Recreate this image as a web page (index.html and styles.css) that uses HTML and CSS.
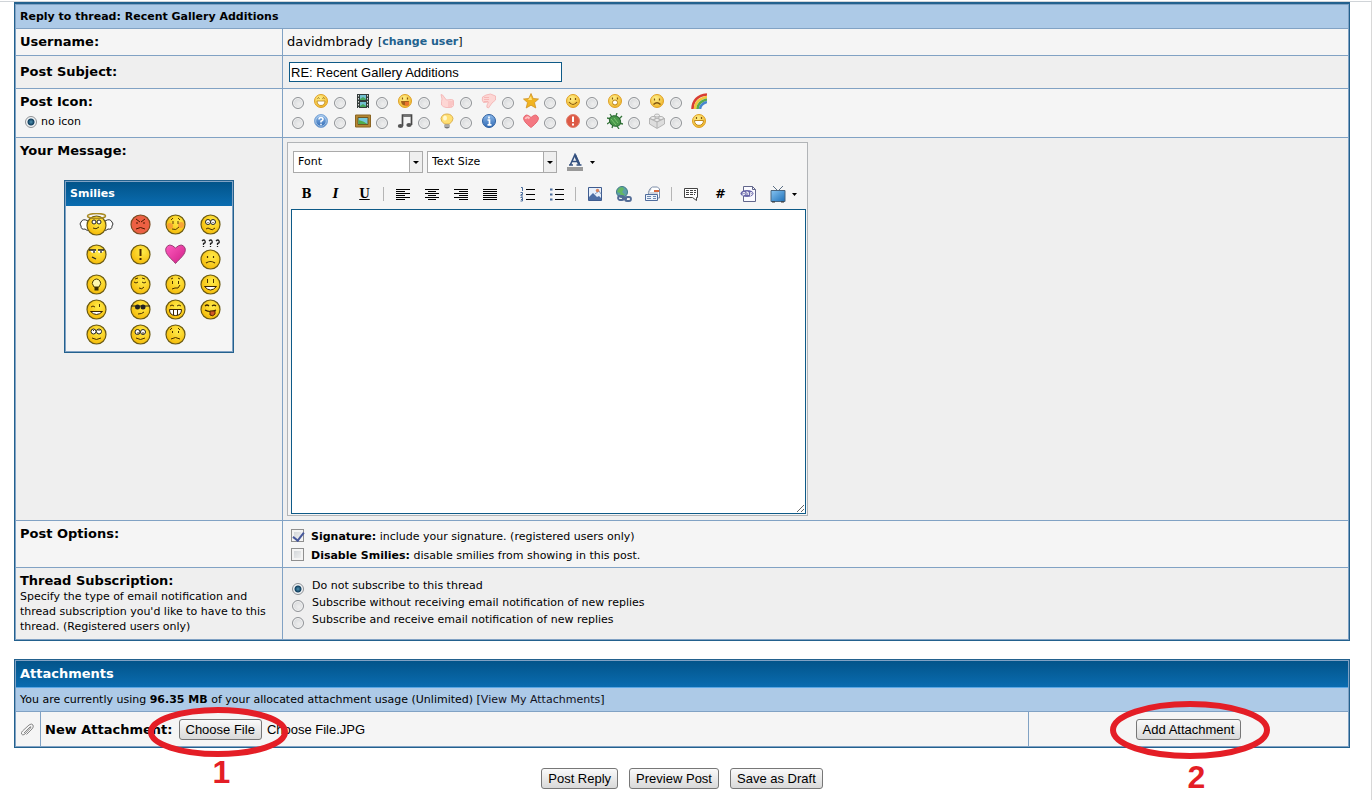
FILE: index.html
```html
<!DOCTYPE html>
<html lang="en">
<head>
<meta charset="utf-8">
<title>Reply to thread: Recent Gallery Additions</title>
<link rel="stylesheet" href="styles.css">
</head>
<body>
<svg class="defs" aria-hidden="true">
  <defs>
    <radialGradient id="gold" cx=".6" cy=".35" r=".75"><stop offset="0" stop-color="#ffec4a"/><stop offset="1" stop-color="#f4b400"/></radialGradient>
    <radialGradient id="soft" cx=".4" cy=".3" r=".8"><stop offset="0" stop-color="#fff08a"/><stop offset="1" stop-color="#eeae1e"/></radialGradient>
    <linearGradient id="blue" x1="0" y1="0" x2="0" y2="1"><stop offset="0" stop-color="#8db9ea"/><stop offset="1" stop-color="#2f69b3"/></linearGradient>
    <linearGradient id="sky" x1="0" y1="0" x2="1" y2="1"><stop offset="0" stop-color="#86c4f2"/><stop offset="1" stop-color="#1f70b8"/></linearGradient>
    <linearGradient id="pink" x1="0" y1="0" x2="1" y2="1"><stop offset="0" stop-color="#ff5cc0"/><stop offset="1" stop-color="#cf1f86"/></linearGradient>
  </defs>
  <symbol id="face" viewBox="0 0 21 21"><circle cx="10.5" cy="10.5" r="9.5" fill="url(#gold)" stroke="#6b5a12" stroke-width="1.2"/></symbol>
  <symbol id="dot" viewBox="0 0 16 16"><circle cx="8" cy="8" r="6.5" fill="url(#soft)" stroke="#dfa126"/></symbol>
</svg>

<main class="page">
<form class="panel">
  <h1 class="bar">Reply to thread: Recent Gallery Additions</h1>

  <div class="row">
    <div class="cell name">Username:</div>
    <div class="cell user">davidmbrady <span class="small">[<a href="#">change user</a>]</span></div>
  </div>

  <div class="row alt">
    <label class="cell name middle" for="subject">Post Subject:</label>
    <div class="cell subject"><input class="text" id="subject" type="text" value="RE: Recent Gallery Additions"></div>
  </div>

  <div class="row">
    <div class="cell name">Post Icon:
      <label class="small none"><input class="radio" type="radio" name="icon" checked>no icon</label>
    </div>
    <div class="cell icons">
      <label><input class="radio" type="radio" name="icon" aria-label="grin"><svg viewBox="0 0 16 16"><use href="#dot"/><path d="M4 8h8c0 6-8 6-8 0z" fill="#fff" stroke="#b98318" stroke-width=".8"/><path d="M4.500 5.500q1-1.500 2 0M9.500 5.500q1-1.500 2 0" fill="none" stroke="#8a6010"/></svg></label>
      <label><input class="radio" type="radio" name="icon" aria-label="film"><svg viewBox="0 0 16 16"><path d="M2 1h12v14H2z" fill="#333c3a"/><path d="M5 2h6v5H5zM5 9h6v5H5z" fill="#72bfd0"/><path d="M5 6l3-2 3 2v1H5zM5 13l3-2 3 2v1H5z" fill="#46a45a"/><path d="M3.500 2v13M12.500 2v13" stroke="#ddd" stroke-dasharray="1.500 1.500"/></svg></label>
      <label><input class="radio" type="radio" name="icon" aria-label="tongue"><svg viewBox="0 0 16 16"><use href="#dot"/><path d="M4 8h8c0 6-8 6-8 0z" fill="#a4601a"/><path d="M8 9h4v3q-2 2-4 0z" fill="#e8742c"/><path d="M5.500 4.500v2M10.500 4.500v2" stroke="#8a5410" stroke-width="1.200"/></svg></label>
      <label><input class="radio" type="radio" name="icon" aria-label="thumb up"><svg viewBox="0 0 16 16"><path d="M2 1.500q2 0 3 2.500l2.500 3 5-.5q2.500 0 2 2.500v3.500q-1 2-3 2H7q-3-.5-4.500-2.500V8.500L3 6z" fill="#fdd6d4" stroke="#f3b0b0" stroke-width=".8"/><path d="M9 9h5M9 11h5M9 13h4" stroke="#f3a9a9" stroke-width=".7"/></svg></label>
      <label><input class="radio" type="radio" name="icon" aria-label="thumb down"><svg viewBox="0 0 16 16"><path d="M1.500 4q3-2.500 8-3l5 2v4l-3.500 3-3.500 5q-2.500 0-1.500-3l1.500-3-5 .5q-2-2-1-5.500z" fill="#fdd6d4" stroke="#f3b0b0" stroke-width=".8"/><path d="M3 4.500h5M3 6.500h5M3 8.500h4" stroke="#f3a9a9" stroke-width=".7"/></svg></label>
      <label><input class="radio" type="radio" name="icon" aria-label="star"><svg viewBox="0 0 16 16"><path d="M8 .5l2.200 5 5.300.5-4 3.600 1.300 5.400L8 12.200 3.200 15l1.300-5.400L.5 6l5.300-.5z" fill="#f1b421" stroke="#cf9224" stroke-width=".8"/><path d="M8 3l1 4H5z" fill="#ffe278"/></svg></label>
      <label><input class="radio" type="radio" name="icon" aria-label="smile"><svg viewBox="0 0 16 16"><use href="#dot"/><path d="M4 9q4 5 8 0" fill="none" stroke="#815712" stroke-width="1.200"/><path d="M5.500 5v2M10.500 5v2" stroke="#815712" stroke-width="1.200"/></svg></label>
      <label><input class="radio" type="radio" name="icon" aria-label="surprised"><svg viewBox="0 0 16 16"><use href="#dot"/><ellipse cx="8" cy="9.500" rx="2.500" ry="2.500" fill="#fff" stroke="#b98318"/><path d="M5.500 4.500v2M10.500 4.500v2" stroke="#815712" stroke-width="1.200"/></svg></label>
      <label><input class="radio" type="radio" name="icon" aria-label="sad"><svg viewBox="0 0 16 16"><use href="#dot"/><path d="M4.500 11.500q3.500-3.500 7 0" fill="none" stroke="#815712" stroke-width="1.200"/><path d="M5.500 5.500v2M10.500 5.500v2" stroke="#815712" stroke-width="1.200"/></svg></label>
      <label><input class="radio" type="radio" name="icon" aria-label="rainbow"><svg viewBox="0 0 16 16" fill="none" stroke-width="2.600"><path d="M1.500 16Q2 3 16 1.500" stroke="#d93d32"/><path d="M4 16Q4.500 6 16 4" stroke="#f0c63c"/><path d="M6.500 16Q7 8.500 16 6.500" stroke="#59ab4a"/><path d="M9 16Q9.500 11 16 9" stroke="#4686cf"/></svg></label>
      <label><input class="radio" type="radio" name="icon" aria-label="question"><svg viewBox="0 0 16 16"><circle cx="8" cy="8" r="6.500" fill="url(#blue)" stroke="#7fa7d6"/><circle cx="8" cy="8" r="5.300" fill="none" stroke="#c9dff5" stroke-width=".7"/><path d="M6 6.500q0-2 2-2t2 1.800Q9.800 7.500 8 8.300V9.500M8 10.800v1.500" fill="none" stroke="#fff" stroke-width="1.500"/></svg></label>
      <label><input class="radio" type="radio" name="icon" aria-label="picture"><svg viewBox="0 0 16 16"><path d="M.5 2h15v12H.5z" fill="#b48732" stroke="#8b6523"/><path d="M3 4.500h10v7H3z" fill="#74c9dd" stroke="#6d5724"/><path d="M3.500 7q5 1 9 4h-9z" fill="#50ad4c"/></svg></label>
      <label><input class="radio" type="radio" name="icon" aria-label="music"><svg viewBox="0 0 16 16"><path d="M5.500 13V2h9v10" fill="none" stroke="#484848" stroke-width="1.700"/><path d="M6 3.500h8" stroke="#777"/><ellipse cx="3.500" cy="13" rx="2.700" ry="2" fill="#555"/><ellipse cx="12" cy="12" rx="2.700" ry="2" fill="#555"/></svg></label>
      <label><input class="radio" type="radio" name="icon" aria-label="idea"><svg viewBox="0 0 16 16"><path d="M5.500 11Q1.500 8 2 5.500 3 1 8 1t6 4.500Q14 8 10.500 11z" fill="#ffdf72" stroke="#ddb150"/><ellipse cx="6" cy="5" rx="2" ry="2.500" fill="#fff8d0"/><path d="M5.500 11.500h5v3q-2.500 2-5 0z" fill="#777"/><path d="M6 13h4" stroke="#ddd"/></svg></label>
      <label><input class="radio" type="radio" name="icon" aria-label="information"><svg viewBox="0 0 16 16"><circle cx="8" cy="8" r="6.500" fill="url(#blue)" stroke="#2f60a0"/><path d="M6.500 7H8.500v4.500M6.500 11.800h4M8 3.500v2" fill="none" stroke="#fff" stroke-width="1.700"/></svg></label>
      <label><input class="radio" type="radio" name="icon" aria-label="heart"><svg viewBox="0 0 16 16"><path d="M8 14.500Q-.5 8 .7 4.500 3-.5 8 4.500q5-5 7.300 0Q16.500 8 8 14.500z" fill="#f47882" stroke="#e66770"/><path d="M2.500 6q1-3 4-.5" fill="none" stroke="#ffc1c1" stroke-width="2"/></svg></label>
      <label><input class="radio" type="radio" name="icon" aria-label="exclamation"><svg viewBox="0 0 16 16"><circle cx="8" cy="8" r="6.500" fill="#dd5a46" stroke="#e0806f"/><path d="M8 3.500v5.500M8 10.500v2" stroke="#fff" stroke-width="2"/></svg></label>
      <label><input class="radio" type="radio" name="icon" aria-label="bug"><svg viewBox="0 0 16 16"><path d="M5 4L3 1M9 3l1-3M4 6L0 5M6 12l-1 3M10 13l2 3M12 10l4 1M12 6l3-3M3 9l-3 2" stroke="#35763a" stroke-width="1.300"/><ellipse cx="8" cy="8" rx="6" ry="5" fill="#49984b" stroke="#27662f" transform="rotate(35 8 8)"/><path d="M4 6l5 6M7 5l4 5" stroke="#7cc66e"/></svg></label>
      <label><input class="radio" type="radio" name="icon" aria-label="brick"><svg viewBox="0 0 16 16" stroke="#a8a8a8" stroke-width=".8"><path d="M.5 5.500L8 2l7.500 3.500V11L8 15.500.5 11z" fill="#ddd"/><path d="M.5 5.500L8 9l7.500-3.500M8 9v6" fill="none"/><g fill="#eee"><ellipse cx="8" cy="2.500" rx="2.500" ry="1.500"/><ellipse cx="4" cy="5" rx="2.500" ry="1.500"/><ellipse cx="12" cy="5" rx="2.500" ry="1.500"/><ellipse cx="8" cy="7" rx="2.500" ry="1.500"/></g></svg></label>
      <label><input class="radio" type="radio" name="icon" aria-label="big grin"><svg viewBox="0 0 16 16"><use href="#dot"/><path d="M3.500 7.500h9c0 6.500-9 6.500-9 0z" fill="#fff" stroke="#c08a1c"/><path d="M5.500 4v2M10.500 4v2" stroke="#815712" stroke-width="1.200"/></svg></label>
    </div>
  </div>

  <div class="row alt">
    <div class="cell name">
      <label for="message">Your Message:</label>
      <section class="smilies">
        <h2 class="head">Smilies</h2>
        <div class="faces">
          <button type="button" aria-label="angel"><svg width="35" height="23" viewBox="0 0 35 23"><path d="M9 8Q4 5 2 9q-2 2 0 4 0 4 4 3 2 3 5 0M26 8q5-3 7 1 2 2 0 4 0 4-4 3-2 3-5 0" fill="#fff" stroke="#333"/><use href="#face" x="7" y="2" width="21" height="21"/><ellipse cx="17.500" cy="3" rx="9" ry="2.500" fill="none" stroke="#a98a22" stroke-width="1.500"/><circle cx="15" cy="9" r="2" fill="#fff" stroke="#222"/><circle cx="20" cy="9" r="2" fill="#fff" stroke="#222"/><path d="M14 15q3 2 6-1" fill="none" stroke="#4a3600"/></svg></button>
          <button type="button" aria-label="angry"><svg width="21" height="21" viewBox="0 0 21 21"><circle cx="10.500" cy="10.500" r="9.500" fill="#ec6043" stroke="#7b4a20" stroke-width="1.200"/><path d="M6 5l4 3M15 5l-4 3M7 8v2M14 8v2M6 15q4.500-3 9 0" fill="none" stroke="#4a1800"/></svg></button>
          <button type="button" aria-label="blush"><svg width="21" height="21" viewBox="0 0 21 21"><use href="#face"/><circle cx="5" cy="12" r="3" fill="#f7903a" opacity=".7"/><circle cx="16" cy="11" r="3" fill="#f7903a" opacity=".7"/><path d="M6 6l2-2M13 4l2 2M8 7v3M13 7v3M7 15q4 2 7-2" fill="none" stroke="#5a3b00"/></svg></button>
          <button type="button" aria-label="confused"><svg width="21" height="21" viewBox="0 0 21 21"><use href="#face"/><circle cx="8" cy="8" r="2.500" fill="#fff" stroke="#222"/><circle cx="13" cy="8" r="2.500" fill="#fff" stroke="#222"/><path d="M8 8v1M13 8v1M6 15q2-2 4 0t5-1" fill="none" stroke="#4a3000"/></svg></button>

          <button type="button" aria-label="dodgy"><svg width="21" height="31" viewBox="0 0 21 31"><use href="#face" y="5" width="21" height="21"/><path d="M4 11h6v2q-3 2-5 0zM12 11h6l-1 2q-3 2-5 0z" fill="#fff"/><path d="M3 11h7M12 11h6M8 12v2M15 12v2M6 18l4 2" fill="none" stroke="#222" stroke-width="1.300"/></svg></button>
          <button type="button" aria-label="exclamation"><svg width="21" height="31" viewBox="0 0 21 31"><use href="#face" y="5" width="21" height="21"/><path d="M10.500 10v7M10.500 19v2" stroke="#4a2b00" stroke-width="2"/></svg></button>
          <button type="button" aria-label="heart"><svg width="21" height="31" viewBox="0 0 21 31"><path d="M10.500 24.500C7 20-1 15 1 9q3-6 9.500 0 6.500-6 9.500 0c2 6-6 11-9.500 15.500z" fill="url(#pink)" stroke="#9b3e75"/></svg></button>
          <button type="button" aria-label="huh"><svg width="21" height="31" viewBox="0 0 21 31"><use href="#face" y="10" width="21" height="21"/><path d="M2 2q2-2 3 0T3.500 4.500V6M3.500 7v1M9 2q2-2 3 0t-1.500 2.500V6M10.500 7v1M16 2q2-2 3 0t-1.500 2.500V6M17.500 7v1" fill="none" stroke="#222" stroke-width="1.300"/><path d="M7.500 17v2M13.500 17v2M6 24q4.500-3 9 0" fill="none" stroke="#4a3000" stroke-width="1.200"/></svg></button>

          <button type="button" aria-label="idea"><svg width="21" height="21" viewBox="0 0 21 21"><use href="#face"/><path d="M8 13Q5 9 7 7q3.500-4 7 0 2 2-1 6z" fill="#fff8b0" stroke="#4a3a00"/><path d="M8.500 13h4v3.500h-4z" fill="#3b2c00"/></svg></button>
          <button type="button" aria-label="sleepy"><svg width="21" height="21" viewBox="0 0 21 21"><use href="#face"/><path d="M4 8q2 2 4 0M12 8q2 2 4 0M5 5l3-1M12 4l3 1M9 14q3 2 5-1" fill="none" stroke="#4a3000"/></svg></button>
          <button type="button" aria-label="undecided"><svg width="21" height="21" viewBox="0 0 21 21"><use href="#face"/><path d="M6 5l2-1M13 4l2 1M7.500 7v3M13.500 7v3M7 15l3-1 3 0 2-3" fill="none" stroke="#4a3000"/></svg></button>
          <button type="button" aria-label="big grin"><svg width="21" height="21" viewBox="0 0 21 21"><use href="#face"/><path d="M7.500 5v4M13.500 5v4" stroke="#4a3000"/><path d="M4.500 12.500h12q-6 7-12 0z" fill="#fff" stroke="#3b2400"/></svg></button>

          <button type="button" aria-label="wink"><svg width="21" height="21" viewBox="0 0 21 21"><use href="#face"/><path d="M5 8q2-2 4 0M13.500 5v3" fill="none" stroke="#4a3000"/><path d="M4.500 12.500h12q-6 6-12 0z" fill="#fff" stroke="#3b2400"/></svg></button>
          <button type="button" aria-label="cool"><svg width="21" height="21" viewBox="0 0 21 21"><use href="#face"/><path d="M1 7h19" stroke="#222"/><circle cx="7.500" cy="8" r="2.500" fill="#222"/><circle cx="13" cy="8" r="2.500" fill="#222"/><path d="M8 15q4 0 6-2" fill="none" stroke="#4a3000"/></svg></button>
          <button type="button" aria-label="teeth"><svg width="21" height="21" viewBox="0 0 21 21"><use href="#face"/><path d="M5 7q2-2 4 0M12 7q2-2 4 0" fill="none" stroke="#4a3000"/><path d="M4.500 10.500h12q0 6-6 6t-6-6zM8.500 10.500v5.500M12.500 10.500v5.500" fill="#fff" stroke="#3b2400"/></svg></button>
          <button type="button" aria-label="tongue"><svg width="21" height="21" viewBox="0 0 21 21"><use href="#face"/><path d="M5 7q2-2 4 0M12 7q2-2 4 0M5 11q5 3 11 0" fill="none" stroke="#3b2400" stroke-width="1.200"/><path d="M10 12h5v3q-2 3-5 1z" fill="#cf5a28" stroke="#5a2400"/></svg></button>

          <button type="button" aria-label="rolleyes"><svg width="21" height="21" viewBox="0 0 21 21"><use href="#face"/><circle cx="7.500" cy="7.500" r="2.500" fill="#fff" stroke="#222"/><circle cx="13" cy="7.500" r="2.500" fill="#fff" stroke="#222"/><path d="M7.500 6v1M13 6v1M6 14q4.500 3 9 0" fill="none" stroke="#4a3000"/></svg></button>
          <button type="button" aria-label="smile"><svg width="21" height="21" viewBox="0 0 21 21"><use href="#face"/><circle cx="7.500" cy="8" r="2.500" fill="#fff" stroke="#222"/><circle cx="13" cy="8" r="2.500" fill="#fff" stroke="#222"/><path d="M8 8v2M13 8v2M6 14q4.500 3 9 0" fill="none" stroke="#4a3000"/></svg></button>
          <button type="button" aria-label="sad"><svg width="21" height="21" viewBox="0 0 21 21"><use href="#face"/><path d="M5 6l2-2M13 4l2 2M7.500 7v2M13.500 7v2M6 15q4.500-3 9 0" fill="none" stroke="#4a3000"/></svg></button>
        </div>
      </section>
    </div>
    <div class="cell compose">
      <div class="editor">
        <div class="tools pickers">
          <span class="picker"><select aria-label="Font"><option>Font</option></select></span>
          <span class="picker"><select aria-label="Text size"><option>Text Size</option></select></span>
          <button class="color" type="button" aria-label="Text color"><svg width="28" height="18" viewBox="0 0 28 18"><path d="M0 14h16v4H0z" fill="#999"/><path d="M23 8h5l-2.500 3z"/><path d="M3.500 11.500L8 1.500l4.500 10M5.500 8.500h5M2 12h4M9.500 12h5" fill="none" stroke="#33507f" stroke-width="1.600"/><path d="M8 2l4 9" stroke="#33507f" stroke-width="2.400"/></svg></button>
        </div>
        <div class="tools">
          <button type="button" class="glyph">B</button>
          <button type="button" class="glyph italic">I</button>
          <button type="button" class="glyph under">U</button>
          <span class="sep"></span>
          <button type="button" aria-label="Align left"><svg width="16" height="16"><path d="M1 3.500h14M1 5.500h9M1 7.500h14M1 9.500h9M1 11.500h14M1 13.500h9" stroke="#000"/></svg></button>
          <button type="button" aria-label="Align center"><svg width="16" height="16"><path d="M1 3.500h14M4 5.500h8M1 7.500h14M4 9.500h8M1 11.500h14M4 13.500h8" stroke="#000"/></svg></button>
          <button type="button" aria-label="Align right"><svg width="16" height="16"><path d="M1 3.500h14M6 5.500h9M1 7.500h14M6 9.500h9M1 11.500h14M6 13.500h9" stroke="#000"/></svg></button>
          <button type="button" aria-label="Justify"><svg width="16" height="16"><path d="M1 3.500h14M1 5.500h14M1 7.500h14M1 9.500h14M1 11.500h14M1 13.500h14" stroke="#000"/></svg></button>
          <span class="sep blank"></span>
          <button type="button" aria-label="Numbered list"><svg width="16" height="16"><path d="M6 3.500h9M6 8.500h9M6 13.500h9" stroke="#000"/><path d="M1 1.500h1.500V5M.5 6.500h2v2H1V10h2M.5 11.500h2v3.500h-2M1 13.500h2" fill="none" stroke="#4a6c9c"/></svg></button>
          <button type="button" aria-label="Bulleted list"><svg width="16" height="16"><path d="M6 3.500h9M6 8.500h9M6 13.500h9" stroke="#000"/><path d="M1 2.500h2.500v2H1zM1 7.500h2.500v2H1zM1 12.500h2.500v2H1z" fill="#4a6c9c"/></svg></button>
          <span class="sep"></span>
          <button type="button" aria-label="Insert image"><svg width="16" height="16"><path d="M1.500 1.500h13v13h-13z" fill="#e8f0fb" stroke="#3f5c8f"/><path d="M2 11l4-4 4 4 2-1 2 2v2H2z" fill="#4d6ea5"/><path d="M8 8l4-3 2 3" fill="none" stroke="#8299c0"/><circle cx="10.500" cy="4.500" r="1.700" fill="#d8845f"/></svg></button>
          <button type="button" aria-label="Insert link"><svg width="18" height="16"><circle cx="7" cy="6" r="5.500" fill="#5d9fa7" stroke="#3e7887"/><path d="M4 2q4-2 5 1L7 6l3 3-4 2-1-4-3-1z" fill="#64b862"/><g fill="none" stroke="#536c96" stroke-width="1.800"><rect x="3" y="10" width="6" height="4" rx="2"/><rect x="10" y="11" width="6" height="4" rx="2"/><path d="M7 12l5 1"/></g></svg></button>
          <button type="button" aria-label="Insert email"><svg width="17" height="16"><path d="M4.500 6q1-4 4-5h5l2 2v9h-11z" fill="#fff" stroke="#7d8da8"/><path d="M7 3l-3 4h10" fill="none" stroke="#a4adbd"/><path d="M10 5h5" stroke="#d8683c" stroke-width="2"/><path d="M1.500 8.500h12v6h-12z" fill="#edf3fb" stroke="#4f6c9c"/><path d="M3 10.500h4M3 12.500h4M9 10.500h3M9 12.500h3" stroke="#6e89b1"/></svg></button>
          <span class="sep"></span>
          <button type="button" aria-label="Quote"><svg width="16" height="16"><path d="M1.500 2.500h13v9h-1v3l-4-3h-8z" fill="#fff" stroke="#444"/><path d="M3 4.500h10M3 6.500h10M3 8.500h9" stroke="#444" stroke-dasharray="3 1"/></svg></button>
          <button type="button" class="glyph hash">#</button>
          <button type="button" aria-label="PHP code"><svg width="17" height="17"><path d="M3.500.5h9l3 3v12h-12z" fill="#fafaff" stroke="#62668b"/><path d="M12.500.5v3h3" fill="none" stroke="#62668b"/><ellipse cx="7" cy="7.500" rx="6.500" ry="3.500" fill="#6765a9"/><path d="M3 10V6.500h2v2H3M7 5v4M7 6.500h1.500V9M10.500 10V6.500h1.500v2h-1" fill="none" stroke="#fff" stroke-width=".8"/></svg></button>
          <button type="button" aria-label="Insert video"><svg width="16" height="17"><path d="M3 0l5 5 5-5" fill="none" stroke="#5c7086"/><path d="M1 4.500h14v11H1z" fill="url(#sky)" stroke="#49657f"/><path d="M2 16h3M11 16h3" stroke="#333"/></svg></button>
          <svg class="caret" width="5" height="3"><path d="M0 0h5L2.500 3z"/></svg>
        </div>
        <textarea id="message" class="message"></textarea>
      </div>
    </div>
  </div>

  <div class="row">
    <div class="cell name">Post Options:</div>
    <div class="cell options small">
      <label><input class="check" type="checkbox" checked><span><b>Signature:</b> include your signature. (registered users only)</span></label>
      <label><input class="check" type="checkbox"><span><b>Disable Smilies:</b> disable smilies from showing in this post.</span></label>
    </div>
  </div>

  <div class="row alt">
    <div class="cell name">Thread Subscription:
      <p class="small hint">Specify the type of email notification and thread subscription you'd like to have to this thread. (Registered users only)</p>
    </div>
    <div class="cell subs small">
      <label><input class="radio" type="radio" name="sub" checked>Do not subscribe to this thread</label>
      <label><input class="radio" type="radio" name="sub">Subscribe without receiving email notification of new replies</label>
      <label><input class="radio" type="radio" name="sub">Subscribe and receive email notification of new replies</label>
    </div>
  </div>
</form>

<section class="panel attachments">
  <h2 class="head">Attachments</h2>
  <p class="usage small">You are currently using <b>96.35 MB</b> of your allocated attachment usage (Unlimited) [<a href="#">View My Attachments</a>]</p>
  <div class="attach">
    <div class="clip"><svg width="14" height="14" viewBox="0 0 14 14" fill="none" stroke="#888"><path d="M4 10l6-6q1.500-1 .5 1L5 11q-2.500 2-3.500 0-.5-1.500 1-3L9 2q2.500-2 4 0 1 2-1 4l-5.500 5.500"/></svg></div>
    <div class="file">
      <b>New Attachment:</b>
      <span class="mark one"><button class="btn" type="button">Choose File</button>
        <svg class="ring" width="140" height="50"><ellipse cx="70" cy="25" rx="67" ry="22"/></svg><span class="num">1</span></span>
      <span class="chosen">Choose File.JPG</span>
    </div>
    <div class="add">
      <span class="mark two"><button class="btn" type="button">Add Attachment</button>
        <svg class="ring" width="160" height="58"><ellipse cx="80" cy="29" rx="77" ry="26"/></svg><span class="num">2</span></span>
    </div>
  </div>
</section>

<div class="actions">
  <button class="btn" type="button">Post Reply</button>
  <button class="btn" type="button">Preview Post</button>
  <button class="btn" type="button">Save as Draft</button>
</div>
</main>
</body>
</html>
```

FILE: styles.css
```css
* { box-sizing: border-box; }

body {
  margin: 0;
  background: #fff;
  color: #000;
  font: 13px/16px Verdana, "DejaVu Sans", sans-serif;
}

h1, h2, p { margin: 0; }
a { color: #22618e; font-weight: bold; text-decoration: none; }
button { font: inherit; color: inherit; }
svg { display: block; }
.defs { position: absolute; width: 0; height: 0; }

.page {
  min-height: 100vh;
  padding: 1px 21px 10px 14px;
  border-top: 1px solid #fff;
  border-right: 1px solid #d8d8d8;
  box-shadow: inset 0 1px #d0d4d8;
}

.panel {
  border: 1px solid #23618e;
  box-shadow: inset 0 0 0 1px #81a2c4;
  padding: 1px;
}
form.panel { border-top-width: 2px; }

.bar {
  padding: 4px 4px 3px;
  background: #adcae7;
  font-size: 11px;
}

.row {
  display: grid;
  grid-template-columns: 266px 1fr;
  border-top: 1px solid #81a2c4;
  background: #f5f5f5;
}
.row.alt { background: #efefef; }
.cell { padding: 5px 4px; }
.cell + .cell { border-left: 1px solid #81a2c4; }
.name { font-weight: bold; }
.name.middle { align-self: center; }
.small { font-size: 11px; font-weight: normal; }
.user { display: flex; gap: 5px; }

.subject { padding: 6px; }
.text {
  display: block;
  width: 273px;
  height: 20px;
  padding: 0 1px;
  border: 1px solid #0e5a87;
  background: #fff;
  font: 13px/16px "Liberation Sans", Arial, sans-serif;
}

.radio, .check { appearance: none; flex: none; margin: 0; }
.radio {
  width: 12px;
  height: 12px;
  border: 1px solid #8f9296;
  border-radius: 50%;
  background: radial-gradient(circle at 60% 60%, #eee, #cfd2d5);
  box-shadow: inset 0 0 0 1px #f4f4f4;
}
.radio:checked { background: radial-gradient(circle, #4f93b3 0, #123f5e 3px, #e8eef2 4px); }
.check {
  width: 13px;
  height: 13px;
  border: 1px solid #8f8f8f;
  background: linear-gradient(135deg, #ccd0d4, #f6f6f6);
  box-shadow: inset 0 0 0 2px #f4f4f4;
}
.check:checked::before {
  content: "";
  display: block;
  width: 5px;
  height: 9px;
  margin: 0 3px;
  border: solid #46579b;
  border-width: 0 2px 2px 0;
  transform: rotate(38deg);
}

.none { display: flex; align-items: center; gap: 4px; padding: 4px 5px 0; }
.icons {
  display: grid;
  grid-template-columns: repeat(10, 42px);
  padding: 4px;
}
.icons label { display: flex; gap: 9px; height: 20px; padding-left: 5px; }
.icons .radio { margin-top: 4px; }
.icons svg { width: 16px; height: 16px; }

.smilies {
  width: 170px;
  margin: 21px 0 0 44px;
  padding: 1px;
  border: 1px solid #23618e;
  background: #f5f5f5;
  box-shadow: inset 0 0 0 1px #81a2c4;
}
.head {
  padding: 5px 4px;
  background: linear-gradient(#02548a, #0a6cb0);
  color: #fff;
  font-size: 13px;
}
.smilies .head { padding: 4px; font-size: 11px; }
.faces {
  display: grid;
  grid-template-columns: 54px repeat(3, 35px);
  grid-template-rows: 30px 33px repeat(3, 25px);
  justify-items: center;
  padding: 3px 3px 4px;
}
.faces button { display: grid; place-items: center; padding: 0; border: 0; background: none; }
.faces button:nth-child(n+5):nth-child(-n+8) { place-items: start center; }

.compose { padding: 4px; }
.editor {
  width: 521px;
  padding: 7px 1px 1px 3px;
  border: 1px solid #b1b4b7;
  background: #f5f5f5;
}
.tools { display: flex; align-items: center; height: 28px; padding-left: 1px; }
.tools button {
  display: grid;
  place-items: center;
  flex: none;
  width: 29px;
  height: 20px;
  padding: 0;
  border: 0;
  background: none;
}
.tools.pickers { gap: 4px; height: 24px; margin-bottom: 6px; padding-left: 2px; }
.picker { position: relative; width: 130px; }
.picker select {
  display: block;
  appearance: none;
  width: 100%;
  height: 22px;
  padding: 0 4px;
  border: 1px solid #aaa;
  border-radius: 0;
  background: linear-gradient(90deg, #aaa 1px, #efefef 1px) right / 13px 100% no-repeat #fff;
  color: #000;
  font: 11px/16px Verdana, "DejaVu Sans", sans-serif;
}
.picker::after {
  content: "";
  position: absolute;
  top: 10px;
  right: 4px;
  border: solid transparent;
  border-width: 3px 3px 0;
  border-top-color: #000;
  pointer-events: none;
}
.tools .color { width: 28px; margin-left: 6px; }
.tools .glyph { font: bold 12px/16px "DejaVu Serif", Georgia, serif; }
.tools .italic { font-style: italic; }
.tools .under { text-decoration: underline; }
.tools .hash { font: italic bold 13px/16px "DejaVu Sans", sans-serif; }
.sep { flex: none; width: 9px; height: 14px; background: linear-gradient(#b5b5b5, #b5b5b5) center / 1px 100% no-repeat; }
.sep.blank { background: none; }
.message {
  display: block;
  width: 100%;
  height: 305px;
  margin-top: 1px;
  border: 1px solid #0e5a87;
  background: #fff;
  font: 13px/16px Verdana, "DejaVu Sans", sans-serif;
}

.options { padding: 6px 4px 2px; }
.options label { display: flex; gap: 7px; height: 19px; padding: 2px 0 0 4px; }

.hint { line-height: 15px; }
.subs { padding: 10px 4px; }
.subs label { display: flex; align-items: start; gap: 8px; height: 17px; padding-left: 5px; }
.subs .radio { margin-top: 5px; }

.attachments { margin-top: 18px; }
.usage {
  padding: 4px 4px 3px;
  border-top: 1px solid #5ba7e5;
  background: #adcae7;
}
.usage a { color: #112; font-weight: normal; }
.attach {
  display: grid;
  grid-template-columns: 24px 1fr 320px;
  border-top: 1px solid #81a2c4;
  background: #f5f5f5;
}
.attach > div { display: flex; align-items: center; padding: 7px 4px 6px; }
.attach > div + div { border-left: 1px solid #81a2c4; }
.attach .add { justify-content: center; }
.btn {
  height: 21px;
  padding: 0 6px;
  border: 1px solid #777;
  border-radius: 3px;
  background: linear-gradient(#fafafa, #d9d9d9);
  font: 13px/16px "Liberation Sans", Arial, sans-serif;
  white-space: nowrap;
}
.chosen { margin-left: 5px; font: 13px/16px "Liberation Sans", Arial, sans-serif; }

/* Step markers drawn over the two buttons */
.mark { position: relative; display: flex; }
.mark.one { margin-left: 6px; }
.ring { position: absolute; top: -12px; left: -31px; fill: none; stroke: #e41e26; stroke-width: 6; pointer-events: none; }
.two .ring { top: -18px; left: -26px; }
.num { position: absolute; top: 35px; left: 34px; color: #e41e26; font: bold 32px/36px "Liberation Sans", Arial, sans-serif; }
.two .num { top: 40px; left: 52px; }

.actions { display: flex; justify-content: center; gap: 11px; margin-top: 20px; }
```
